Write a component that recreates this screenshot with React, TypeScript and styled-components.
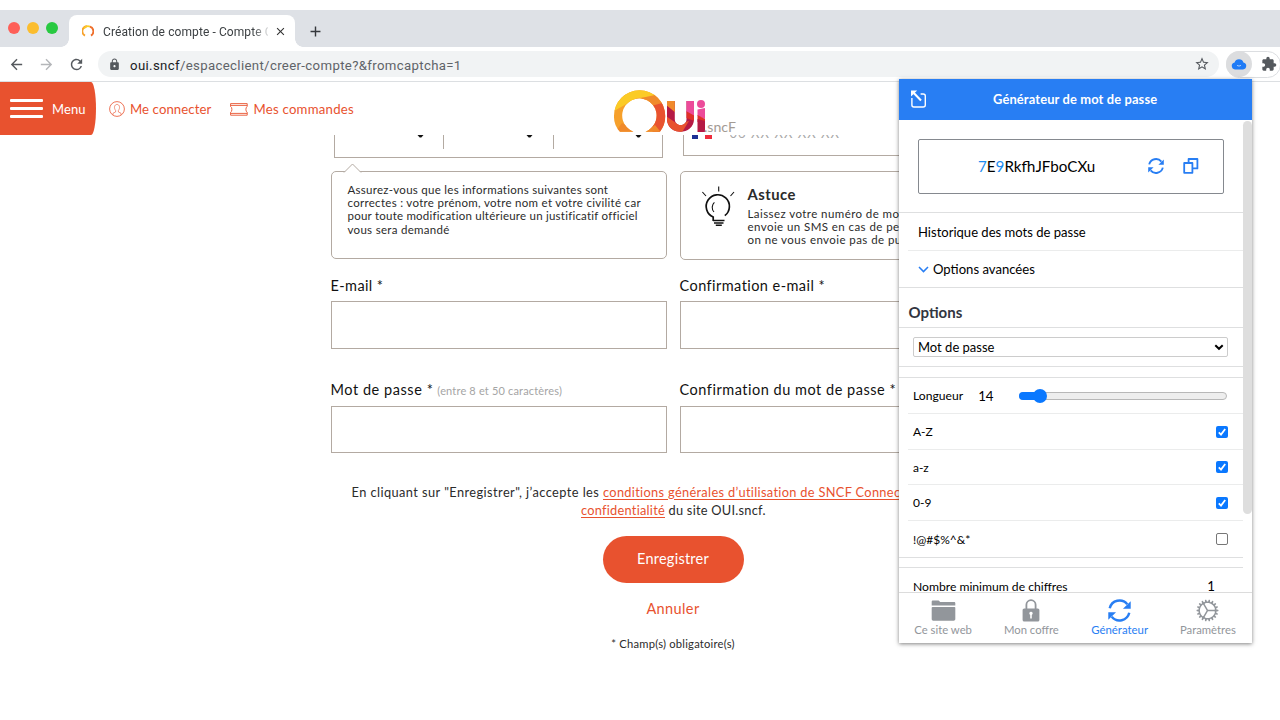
import React from 'react';
import styled, { createGlobalStyle } from 'styled-components';
import { MdArrowBack, MdArrowForward, MdRefresh, MdLock, MdStarBorder, MdExtension, MdClose, MdAdd } from 'react-icons/md';
import { IoIosFolder, IoIosCog } from 'react-icons/io';

const orange = '#e8522f';
const line = '#b3aaa2';
const blue = '#287ef3';

const Global = createGlobalStyle`
  * { box-sizing: border-box; }
  body { margin: 0; background: #fff; overflow: hidden; }
  button, input { font: inherit; }
`;

const Screen = styled.div`
  position: relative;
  width: 1280px;
  height: 720px;
  padding-top: 10px;
  overflow: hidden;
  background: #fff;
  font-family: Lato, 'Liberation Sans', sans-serif;
  color: #2b2b2b;
`;

/* One line of text with tunable size, tracking and colour */
const Text = styled.span<{ $size: number; $track?: number; $color?: string; $weight?: number }>`
  display: inline-block;
  white-space: pre;
  font-size: ${p => p.$size}px;
  letter-spacing: ${p => p.$track ?? 0}px;
  font-weight: ${p => p.$weight ?? 400};
  color: ${p => p.$color ?? 'inherit'};
`;

/* ---------- browser ---------- */
const TabStrip = styled.div`
  display: flex;
  align-items: flex-end;
  height: 37px;
  background: #dee1e6;
`;
const Lights = styled.div`
  display: flex;
  align-self: center;
  gap: 7px;
  padding-left: 8px;
  width: 69px;
`;
const Light = styled.i<{ $color: string }>`
  width: 12px;
  height: 12px;
  margin-bottom: 1px;
  border-radius: 50%;
  background: ${p => p.$color};
`;
const Tab = styled.div`
  position: relative;
  display: flex;
  align-items: center;
  width: 226px;
  height: 32px;
  padding: 0 8px 0 13px;
  border-radius: 8px 8px 0 0;
  background: #fff;
  font-family: Roboto, sans-serif;
  &::before, &::after {
    content: '';
    position: absolute;
    bottom: 0;
    width: 8px;
    height: 8px;
  }
  &::before { left: -8px; background: radial-gradient(circle at 0 0, transparent 7.5px, #fff 8px); }
  &::after { right: -8px; background: radial-gradient(circle at 100% 0, transparent 7.5px, #fff 8px); }
  svg { flex: none; }
`;
const TabTitle = styled.div`
  width: 165px;
  margin: 0 6px 0 9px;
  overflow: hidden;
  line-height: 16px;
  mask-image: linear-gradient(90deg, #000 150px, transparent 168px);
`;
const NewTab = styled.div`
  display: flex;
  padding: 0 0 7px 12px;
  color: #35383c;
`;
const Toolbar = styled.div`
  display: flex;
  align-items: center;
  height: 35px;
  padding-left: 8px;
  border-bottom: 1px solid #dcdfe2;
  color: #55595e;
  svg { flex: none; }
`;
const NavIcons = styled.div`
  display: flex;
  flex: none;
  gap: 13px;
  width: 90px;
`;
const Omnibox = styled.div`
  display: flex;
  align-items: center;
  flex: none;
  width: 1121px;
  height: 26px;
  padding: 0 9px 0 10px;
  border-radius: 13px;
  background: #f1f3f4;
  font-family: Roboto, sans-serif;
`;
const Url = styled.div`
  flex: 1;
  margin-left: 9px;
`;
const Extensions = styled.div`
  display: flex;
  align-items: center;
  flex: none;
  gap: 9px;
  width: 55px;
  height: 27px;
  margin-left: 7px;
  border: 1px solid #dcdee1;
  border-radius: 14px;
`;
const ExtBadge = styled.div`
  display: grid;
  place-items: center;
  width: 26px;
  height: 26px;
  margin-left: -1px;
  border-radius: 50%;
  background: #dcdddf;
`;

/* ---------- site ---------- */
const SiteHeader = styled.header`
  display: flex;
  height: 53px;
  color: ${orange};
`;
const MenuButton = styled.div`
  display: flex;
  align-items: center;
  gap: 9px;
  width: 96px;
  padding-left: 10px;
  border-radius: 0 5px 5px 0 / 0 27px 27px 0;
  background: ${orange};
`;
const Burger = styled.div`
  display: grid;
  gap: 5px;
  width: 33px;
  i { height: 3px; border-radius: 1px; background: #fff; }
`;
const HeaderLink = styled.div<{ $left: number; $gap: number }>`
  display: flex;
  align-items: center;
  gap: ${p => p.$gap}px;
  margin-left: ${p => p.$left}px;
  padding-top: 1px;
  svg { flex: none; }
`;
const LinkArea = styled.div`
  display: flex;
  width: 517px;
`;
const Logo = styled.svg`
  margin-top: 7px;
`;

const Form = styled.main`
  display: grid;
  grid-template-columns: 336px 336px;
  column-gap: 13px;
  width: 685px;
  margin-left: 330.5px;
`;
const CutFields = styled.div`
  display: flex;
  height: 23px;
  width: 329px;
  margin-left: 3px;
  border: 1px solid ${line};
  border-top: 0;
`;
const DatePart = styled.div<{ $last?: boolean }>`
  display: flex;
  justify-content: flex-end;
  flex: none;
  width: ${p => (p.$last ? 107 : 109.5)}px;
  height: 14px;
  padding-right: ${p => (p.$last ? 19 : 19.5)}px;
  border-right: ${p => (p.$last ? 0 : 1)}px solid ${line};
`;
const PhoneField = styled.div`
  display: flex;
  height: 21px;
  margin-left: 3px;
  padding-left: 8px;
  border: 1px solid ${line};
  border-top: 0;
`;
const Flag = styled.div`
  width: 20px;
  height: 4px;
  background: linear-gradient(90deg, #1d2f95 6.5px, #fff 6.5px 13px, #ee2c3c 13px);
`;
const Clipped = styled.div`
  display: flex;
  align-items: flex-end;
  height: 3px;
  margin-left: 18px;
  overflow: hidden;
  span { flex: none; margin-bottom: -3px; line-height: 16px; }
`;
const Tip = styled.div<{ $h: number; $top: number }>`
  position: relative;
  display: flex;
  height: ${p => p.$h}px;
  padding: 11px 0 0 16px;
  border: 1px solid ${line};
  border-radius: 5px;
  margin-top: ${p => p.$top}px;
`;
const Notch = styled.svg`
  position: absolute;
  left: 11px;
  top: -9px;
`;
const Bulb = styled.svg`
  margin: 3px 0 0 3px;
`;
const Lines = styled.div<{ $left?: number }>`
  display: flex;
  flex-direction: column;
  margin-left: ${p => p.$left ?? 0}px;
  span { line-height: 13.2px; }
`;
const TipTitle = styled.div`
  height: 24px;
  line-height: 22px;
`;
const Field = styled.label<{ $top: number }>`
  display: block;
  margin-top: ${p => p.$top}px;
  color: #111;
`;
const FieldLabel = styled.div<{ $h?: number }>`
  display: flex;
  align-items: baseline;
  gap: 4px;
  height: ${p => p.$h ?? 24}px;
  line-height: 18px;
`;
const Box = styled.div`
  height: 47.5px;
  margin-bottom: 0.5px;
  border: 1px solid ${line};
`;
const Col = styled.div``;

const Footer = styled.footer`
  display: flex;
  flex-direction: column;
  align-items: center;
  width: 685px;
  margin: 28px 0 0 330.5px;
`;
const Consent = styled.div`
  align-self: stretch;
  padding-left: 21px;
  white-space: nowrap;
  div { display: flex; height: 18.5px; line-height: 20px; }
  div + div { padding-left: 229.5px; }
  u { color: ${orange}; text-underline-offset: 2px; text-decoration-thickness: 1px; }
`;
const Submit = styled.button`
  width: 141px;
  height: 47px;
  margin-top: 17px;
  padding: 0 0 3px;
  border: 0;
  border-radius: 24px;
  background: ${orange};
  color: #fff;
`;
const Cancel = styled.a`
  height: 20px;
  margin-top: 15px;
  line-height: 20px;
  color: ${orange};
`;
const Note = styled.p`
  margin: 16px 0 0;
  line-height: 16px;
`;

/* ---------- popup ---------- */
const Popup = styled.aside`
  position: absolute;
  left: 899px;
  top: 79px;
  display: flex;
  flex-direction: column;
  width: 353px;
  height: 564px;
  background: #fff;
  box-shadow: 0 1px 4px rgba(0, 0, 0, 0.5);
  color: #000;
`;
const PopHead = styled.div`
  display: flex;
  align-items: center;
  height: 41px;
  padding-left: 12px;
  background: ${blue};
  color: #fff;
  svg { margin-bottom: 2px; }
  span { margin: 0 0 1px 65px; }
`;
const PopBody = styled.div`
  display: flex;
  flex: none;
  height: 472px;
  overflow: hidden;
`;
const PopList = styled.div`
  width: 344px;
`;
const Track = styled.div`
  width: 9px;
  height: 393px;
  margin-top: 1px;
  border-radius: 5px;
  background: #dedede;
`;
const Generated = styled.div`
  display: flex;
  align-items: center;
  width: 306px;
  height: 55px;
  margin: 18.5px 0 18.5px 19px;
  border: 1px solid #85898f;
  border-radius: 2px;
  b { font-weight: 400; color: #1c8cf0; }
  svg { flex: none; }
`;
const Password = styled.div`
  width: 229px;
  padding-left: 59px;
  line-height: 20px;
`;
const IconGap = styled.div`
  display: flex;
  gap: 19px;
`;
const Section = styled.div<{ $top?: number }>`
  margin-top: ${p => p.$top ?? 0}px;
  border-top: 1px solid #dedfe0;
  border-bottom: 1px solid #dedfe0;
`;
const Row = styled.div<{ $h: number; $pad?: number }>`
  display: flex;
  align-items: center;
  height: ${p => p.$h}px;
  margin-left: 9px;
  padding: 0 15px 0 ${p => p.$pad ?? 5}px;
  & + & { border-top: 1px solid #ebecec; }
`;
const Heading = styled.div`
  height: 39px;
  padding: 14px 0 0 9.5px;
  line-height: 20px;
`;
const Select = styled.div`
  display: flex;
  align-items: center;
  justify-content: space-between;
  flex: none;
  width: 315px;
  height: 20px;
  padding: 0 3px 0 4px;
  border: 1px solid #ccc;
  border-radius: 2px;
`;
const Chevron = styled.svg`
  flex: none;
  margin-right: 4px;
`;
const Slider = styled.div`
  display: flex;
  align-items: center;
  width: 208px;
  height: 8px;
  margin: 0 1px 0 auto;
  border: 1px solid #b8b8b8;
  border-radius: 4px;
  background: #eee;
`;
const SliderFill = styled.div`
  width: 20px;
  height: 8px;
  margin-left: -1px;
  border-radius: 4px;
  background: #0a78ff;
`;
const Thumb = styled.div`
  width: 14px;
  height: 14px;
  margin-left: -6px;
  border-radius: 50%;
  background: #0a78ff;
`;
const Value = styled.div<{ $end?: boolean }>`
  display: flex;
  margin-left: ${p => (p.$end ? 'auto' : '15px')};
  margin-right: ${p => (p.$end ? 13 : 0)}px;
`;
const Check = styled.div<{ $on?: boolean }>`
  display: grid;
  place-items: center;
  width: 12px;
  height: 12px;
  margin-left: auto;
  border: ${p => (p.$on ? '0' : '1px solid #777')};
  border-radius: 2px;
  background: ${p => (p.$on ? '#0a78ff' : '#fff')};
`;
const TabBar = styled.nav`
  display: grid;
  grid-template-columns: repeat(4, 1fr);
  height: 51px;
  border-top: 1px solid #dcdcdc;
`;
const TabItem = styled.div<{ $active?: boolean }>`
  display: flex;
  flex-direction: column;
  align-items: center;
  color: ${p => (p.$active ? blue : '#92969b')};
  padding-top: 4px;
  svg { flex: none; }
  span { line-height: 14px; }
`;
const TabIcon = styled.div`
  display: grid;
  place-items: center;
  height: 26px;
`;

const Refresh = ({ size, stroke = 1.7 }: { size: number; stroke?: number }) => (
  <svg width={size} height={size} viewBox="0 0 16 16" fill="none" stroke={blue} strokeWidth={stroke}>
    <path d="M1.2 6.4A7 7 0 0 1 13.4 3.6M14.8 9.6A7 7 0 0 1 2.6 12.4" />
    <path d="M15.8 1.6V6.8H10.4ZM.2 14.4V9.2H5.6Z" fill={blue} stroke="none" />
  </svg>
);

const Padlock = () => (
  <svg width="18" height="23" viewBox="0 0 18 23">
    <path d="M4.4 10V5.8A4.6 4.6 0 0 1 13.6 5.8V10" fill="none" stroke="currentColor" strokeWidth="1.8" />
    <rect x=".6" y="9.4" width="16.8" height="13.2" rx="1.6" fill="currentColor" />
    <path d="M9 12.8a1.7 1.7 0 0 1 .8 3.2v3.4H8.2V16A1.7 1.7 0 0 1 9 12.8z" fill="#fff" />
  </svg>
);

const Caret = () => (
  <svg width="7" height="4" viewBox="0 0 7 4"><path d="M.5 0h6L4.3 2.6h-1.6z" fill="#111" /></svg>
);

const OuiLogo = () => (
  <Logo width="126" height="46" viewBox="613 89 126 46">
    <clipPath id="ring">
      <path d="M620 131.7A21.5 21.5 0 0 1 614 115.8A25.6 25.6 0 0 1 665.2 115.8A25 25 0 0 1 660 131.7H645.4A17.2 17.2 0 1 0 633.4 131.7Z" />
    </clipPath>
    <g clipPath="url(#ring)">
      <path d="M610 86h60v50h-60z" fill="#f6a02b" />
      <path d="M614 108L620 86H662L654 97L637 98L614 111Z" fill="#fbcb26" />
      <path d="M641 98L655 95L670 105L654 107Z" fill="#f08a2b" />
      <path d="M651 106L670 101V128L654 134L648 124Z" fill="#e8522f" />
      <path d="M613 135L622 123L636 130V136ZM640 136L655 125L664 136Z" fill="#f08a2b" />
    </g>
    <clipPath id="u">
      <path d="M667 101H674.8V119C674.8 127 686.5 127 686.5 119V101H694V119C694 136 667 136 667 119Z" />
    </clipPath>
    <g clipPath="url(#u)">
      <path d="M666 100h30v34h-30z" fill="#b51a45" />
      <path d="M666 100h10v13l-10-8z" fill="#f08a2b" />
      <path d="M666 116L679 125L676 134H666Z" fill="#e8522f" />
      <path d="M676 134L677 124L689 121L681 134Z" fill="#e8522f" />
      <path d="M685 100h11v17l-11-5z" fill="#ec4b9a" />
      <path d="M686 111l9 5v5l-9-3z" fill="#e03029" />
    </g>
    <path d="M697.5 109.5l7.5-1.5v11l-7.5-3z" fill="#ec4b9a" />
    <path d="M697.5 115l7.5 4v3h-7.5z" fill="#e03029" />
    <path d="M697.5 119l7.5 2v11h-7.5z" fill="#b51a45" />
    <circle cx="701" cy="104" r="4" fill="#ec4b9a" />
    <text x="704" y="132" fontSize="13" textLength="32" lengthAdjust="spacingAndGlyphs" fill="#a39b94" fontFamily="Lato, sans-serif">.sncF</text>
  </Logo>
);

const checks: [string, boolean, number][] = [
  ['A-Z', true, 36],
  ['a-z', true, 35],
  ['0-9', true, 36],
  ['!@#$%^&*', false, 37],
];

export default function App() {
  return (
    <Screen>
      <Global />
      <TabStrip>
        <Lights>
          <Light $color="#fe5f58" /><Light $color="#fbbd2e" /><Light $color="#28c941" />
        </Lights>
        <Tab>
          <svg width="12" height="12" viewBox="0 0 12 12" fill="none" strokeWidth="1.9">
            <path d="M3 10.6A5 5 0 0 1 5 1.2" stroke="#f7a12a" />
            <path d="M2 3.5A5 5 0 0 1 8 1.6" stroke="#fbcb26" />
            <path d="M8 1.6A5 5 0 0 1 9 10.6" stroke="#ef6f2c" />
          </svg>
          <TabTitle><Text $size={12} $track={0.09} $color="#3c4043">Création de compte - Compte Client</Text></TabTitle>
          <MdClose size={13} color="#333" />
        </Tab>
        <NewTab><MdAdd size={17} /></NewTab>
      </TabStrip>
      <Toolbar>
        <NavIcons>
          <MdArrowBack size={17} /><MdArrowForward size={17} color="#b4b6b9" /><MdRefresh size={17} />
        </NavIcons>
        <Omnibox>
          <MdLock size={13} />
          <Url>
            <Text $size={13.2} $track={0.36} $color="#202124">oui.sncf</Text>
            <Text $size={13.2} $track={0.35} $color="#5f6368">/espaceclient/creer-compte?&amp;fromcaptcha=1</Text>
          </Url>
          <MdStarBorder size={16} />
        </Omnibox>
        <Extensions>
          <ExtBadge>
            <svg width="16" height="12" viewBox="0 0 16 12">
              <path d="M4 11.5A3.6 3.6 0 0 1 3.6 4.4A4.6 4.6 0 0 1 12.4 4.4A3.6 3.6 0 0 1 12 11.5Z" fill="#1f7bf6" />
              <path d="M6 7.4Q8 8.8 10 7.4" stroke="#cfe2ff" fill="none" strokeWidth=".8" />
            </svg>
          </ExtBadge>
          <MdExtension size={16} />
        </Extensions>
      </Toolbar>

      <SiteHeader>
        <MenuButton>
          <Burger><i /><i /><i /></Burger>
          <Text $size={13} $track={0.1} $color="#fff">Menu</Text>
        </MenuButton>
        <LinkArea>
          <HeaderLink $left={13} $gap={5}>
            <svg width="16" height="16" viewBox="0 0 16 16" fill="none" stroke={orange} strokeWidth=".8">
              <circle cx="8" cy="8" r="7.4" />
              <path d="M4 13.8V12.2L6.6 11V9.4C4.6 7 5.4 3.4 8 3.4S11.4 7 9.4 9.4V11L12 12.2V13.8" strokeWidth=".6" />
            </svg>
            <Text $size={13.2} $track={0.08}>Me connecter</Text>
          </HeaderLink>
          <HeaderLink $left={19} $gap={5}>
            <svg width="18" height="13" viewBox="0 0 18 13" fill="none" stroke={orange} strokeWidth=".9">
              <path d="M.6.6H17.2V3.6Q15.9 4 15.9 6.4T17.2 9.2V12.2H.6V9.2Q1.9 8.8 1.9 6.4T.6 3.6ZM.6 2.4H17.2M.6 10.4H17.2" />
            </svg>
            <Text $size={13.2} $track={0.24}>Mes commandes</Text>
          </HeaderLink>
        </LinkArea>
        <OuiLogo />
      </SiteHeader>

      <Form>
        <Col>
          <CutFields>
            <DatePart><Caret /></DatePart><DatePart><Caret /></DatePart><DatePart $last><Caret /></DatePart>
          </CutFields>
          <Tip $h={88} $top={13}>
            <Notch width="19" height="10" viewBox="0 0 19 10"><path d="M1 9.5L9.5 1L18 9.5" fill="#fff" stroke={line} /></Notch>
            <Lines>
              <Text $size={11.5} $track={0.28}>Assurez-vous que les informations suivantes sont</Text>
              <Text $size={11.5} $track={0.3}>correctes : votre prénom, votre nom et votre civilité car</Text>
              <Text $size={11.5} $track={0.23}>pour toute modification ultérieure un justificatif officiel</Text>
              <Text $size={11.5} $track={0.3}>vous sera demandé</Text>
            </Lines>
          </Tip>
          <Field $top={18}>
            <FieldLabel><Text $size={14.5} $track={0.4}>E-mail *</Text></FieldLabel>
            <Box />
          </Field>
          <Field $top={32}>
            <FieldLabel $h={25}>
              <Text $size={14.5} $track={0.55}>Mot de passe *</Text>
              <Text $size={11} $track={0.17} $color="#a5a5a5">(entre 8 et 50 caractères)</Text>
            </FieldLabel>
            <Box />
          </Field>
        </Col>
        <Col>
          <PhoneField>
            <Flag />
            <Clipped><Text $size={13} $track={1.05} $color="#aaa">06 XX XX XX XX</Text></Clipped>
          </PhoneField>
          <Tip $h={89} $top={15}>
            <Bulb width="37" height="42" viewBox="0 0 37 42" fill="none" stroke="#111" strokeWidth="1.7">
              <path d="M13.2 35V31A11.6 11.6 0 1 1 24.8 29.6" />
              <path d="M13 34.5H24.5M14 37H23.5M15.8 39.3H21.8" strokeWidth="1.4" />
              <path d="M14 26A6.8 6.8 0 0 1 14.4 16.4" strokeWidth="1.1" />
              <path d="M18.7 5.5V.5M2.4 6L6 10M34 6L30.5 10" strokeWidth="1.1" />
            </Bulb>
            <Lines $left={11}>
              <TipTitle><Text $size={14.8} $weight={700} $track={0.45}>Astuce</Text></TipTitle>
              <Text $size={11.5} $track={0.43}>Laissez votre numéro de mobile</Text>
              <Text $size={11.5} $track={0.43}>envoie un SMS en cas de perte</Text>
              <Text $size={11.5} $track={0.43}>on ne vous envoie pas de pub</Text>
            </Lines>
          </Tip>
          <Field $top={17}>
            <FieldLabel><Text $size={14.5} $track={0.44}>Confirmation e-mail *</Text></FieldLabel>
            <Box />
          </Field>
          <Field $top={32}>
            <FieldLabel $h={25}><Text $size={14.5} $track={0.52}>Confirmation du mot de passe *</Text></FieldLabel>
            <Box />
          </Field>
        </Col>
      </Form>

      <Footer>
        <Consent>
          <div>
            <Text $size={12.8} $track={0.43}>En cliquant sur "Enregistrer", j’accepte les </Text>
            <Text $size={12.8} $track={0.32}><u>conditions générales d’utilisation de SNCF Connect</u></Text>
          </div>
          <div><Text $size={12.8} $track={0.25}><u>confidentialité</u> du site OUI.sncf.</Text></div>
        </Consent>
        <Submit><Text $size={14.5} $track={0.25}>Enregistrer</Text></Submit>
        <Cancel><Text $size={14.5} $track={0.4}>Annuler</Text></Cancel>
        <Note><Text $size={11.2} $track={0.22}>* Champ(s) obligatoire(s)</Text></Note>
      </Footer>

      <Popup>
        <PopHead>
          <svg width="17" height="18" viewBox="0 0 17 18" fill="none" stroke="#fff" strokeWidth="1.4">
            <path d="M.9 8V15Q.9 17 2.9 17H12.1Q14.3 17 14.3 15V6Q14.3 4 12.1 4H9.6" />
            <path d="M10 10.5L2.8 3" strokeWidth="2.1" />
            <path d="M0 .5H6.2L0 6.6Z" fill="#fff" stroke="none" />
          </svg>
          <Text $size={12.9} $weight={700} $track={0.13}>Générateur de mot de passe</Text>
        </PopHead>
        <PopBody>
          <PopList>
            <Generated>
              <Password><Text $size={15.2}><b>7</b>E<b>9</b>RkfhJFboCXu</Text></Password>
              <IconGap>
                <Refresh size={16} stroke={1.9} />
                <svg width="16" height="16" viewBox="0 0 16 16" fill="none" stroke={blue} strokeWidth="1.8" strokeLinejoin="round">
                  <path d="M5.6 1H14.4V10.4H5.6Z" />
                  <path d="M1.2 5H9.4V14.8H1.2Z" fill="#fff" />
                </svg>
              </IconGap>
            </Generated>
            <Section>
              <Row $h={37} $pad={10}><Text $size={13.05}>Historique des mots de passe</Text></Row>
              <Row $h={37} $pad={10}>
                <Chevron width="11" height="7" viewBox="0 0 11 7" fill="none" stroke={blue} strokeWidth="1.5"><path d="M1 1L5.5 5.6L10 1" /></Chevron>
                <Text $size={13.1}>Options avancées</Text>
              </Row>
            </Section>
            <Heading><Text $size={15} $weight={700} $color="#32363f">Options</Text></Heading>
            <Section>
              <Row $h={38}>
                <Select>
                  <Text $size={13}>Mot de passe</Text>
                  <svg width="10" height="7" viewBox="0 0 10 7" fill="none" stroke="#000" strokeWidth="2"><path d="M1.3 1.2L5 4.8L8.7 1.2" /></svg>
                </Select>
              </Row>
            </Section>
            <Section $top={10}>
              <Row $h={35}>
                <Text $size={12.15}>Longueur</Text>
                <Value><Text $size={13.3}>14</Text></Value>
                <Slider><SliderFill /><Thumb /></Slider>
              </Row>
              {checks.map(([label, on, h]) => (
                <Row key={label} $h={h}>
                  <Text $size={12}>{label}</Text>
                  <Check $on={on}>
                    {on && <svg width="10" height="10" viewBox="0 0 10 10" fill="none" stroke="#fff" strokeWidth="1.8"><path d="M1.8 5.4L4 7.6L8.2 2" /></svg>}
                  </Check>
                </Row>
              ))}
            </Section>
            <Section $top={9}>
              <Row $h={36}>
                <Text $size={12.15}>Nombre minimum de chiffres</Text>
                <Value $end><Text $size={13.3}>1</Text></Value>
              </Row>
            </Section>
          </PopList>
          <Track />
        </PopBody>
        <TabBar>
          <TabItem><TabIcon><IoIosFolder size={27} /></TabIcon><Text $size={11.3}>Ce site web</Text></TabItem>
          <TabItem><TabIcon><Padlock /></TabIcon><Text $size={11.3}>Mon coffre</Text></TabItem>
          <TabItem $active><TabIcon><Refresh size={23} /></TabIcon><Text $size={11.4}>Générateur</Text></TabItem>
          <TabItem><TabIcon><IoIosCog size={27} /></TabIcon><Text $size={11.3}>Paramètres</Text></TabItem>
        </TabBar>
      </Popup>
    </Screen>
  );
}
